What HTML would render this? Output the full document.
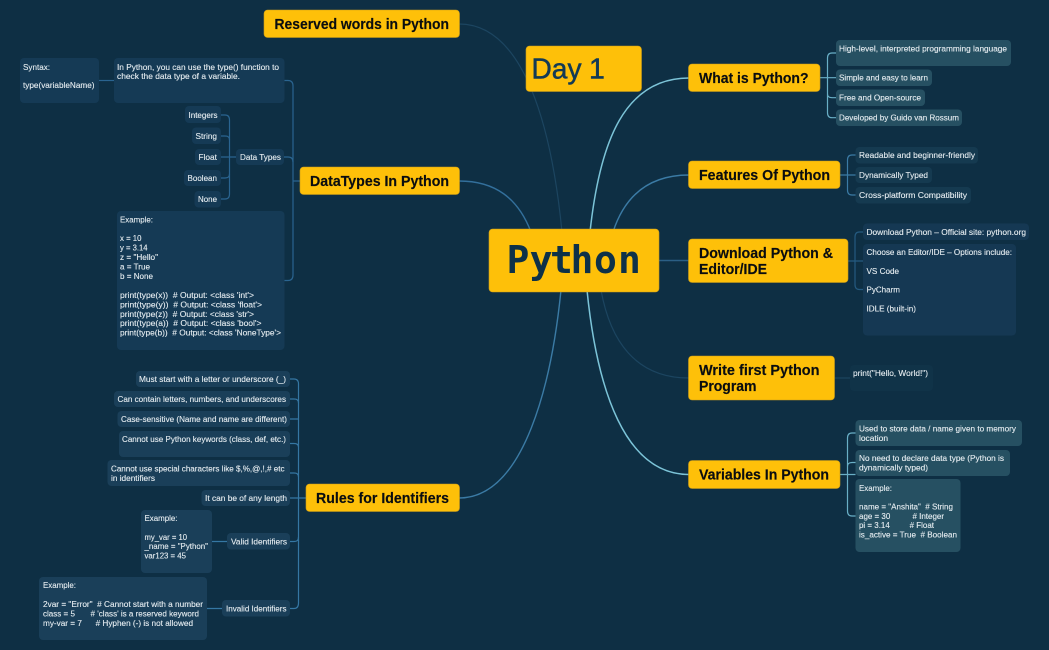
<!DOCTYPE html>
<html><head><meta charset="utf-8"><title>Python Mind Map</title>
<style>
html,body{margin:0;padding:0;background:#0e2f44;width:1049px;height:650px;overflow:hidden}
svg{display:block}
text{white-space:pre;font-family:"Liberation Sans",sans-serif}
.t{font-size:8.7px;fill:#e6edf1;stroke:#e6edf1;stroke-width:.12}
.h{font-size:14.4px;font-weight:700;fill:#0a0d10;stroke:#0a0d10;stroke-width:.15}
.y{fill:#fec009;stroke:#c99b1a;stroke-width:.6}
.l{fill:none;stroke-width:1.2}
</style></head><body>
<svg xmlns="http://www.w3.org/2000/svg" width="1049" height="650" viewBox="0 0 1049 650">
<rect width="1049" height="650" fill="#0e2f44"/>
<!-- main curves -->
<g fill="none">
<path d="M562 232C552 130 525 24 459 24" stroke="#1c4560" stroke-width="1.2"/>
<path d="M531 232C518 198 495 181 459 181" stroke="#33709c" stroke-width="1.4"/>
<path d="M561 290C552 380 525 498 459 498" stroke="#3b7ba5" stroke-width="1.4"/>
<path d="M590 232C600 140 625 78 689 78" stroke="#7cc4d8" stroke-width="1.5"/>
<path d="M613 232C625 195 650 175 689 175" stroke="#3b7ba5" stroke-width="1.4"/>
<path d="M659 260.5H689" stroke="#2b5f85" stroke-width="1.4"/>
<path d="M601 290C610 340 635 378 689 378" stroke="#1c4560" stroke-width="1.2"/>
<path d="M587 290C597 390 625 474.500 689 474.500" stroke="#7cc4d8" stroke-width="1.5"/>
</g>
<!-- branch lines -->
<g class="l" stroke="#2a6490">
<path d="M99 80.500H114"/>
<path d="M284 80.500H288C291.500 80.500 293 82.500 293 86V275C293 278.500 291.500 280.500 288 280.500H284"/>
<path d="M284 157H288C291.500 157 293 158.500 293 162M293 181H300"/>
<path d="M221 115H225C228 115 229.500 116.500 229.500 120V194C229.500 197.500 228 199 225 199H221"/>
<path d="M221 136H225C228 136 229.500 137 229.500 140M221 157H236M221 178H225C228 178 229.500 177 229.500 174"/>
</g>
<g class="l" stroke="#3577a3">
<path d="M290 379H294C297 379 298.500 380.500 298.500 384V603C298.500 606.500 297 608.500 294 608.500H290"/>
<path d="M290 399H294C297 399 298.500 400 298.500 403M290 419H298.500M290 443.500H294C297 443.500 298.500 444.500 298.500 447M290 473H294C297 473 298.500 474 298.500 477M290 498H306M290 541.500H294C297 541.500 298.500 540.500 298.500 537"/>
<path d="M212 541.500H227M207 608.500H222"/>
</g>
<g class="l" stroke="#69afc6">
<path d="M820 77.700H836M836 53H832C829 53 827.500 54.500 827.500 58V112.700C827.500 116.200 829 117.700 832 117.700H836M827.500 94C827.500 96.500 829 97.700 832 97.700H836"/>
<path d="M840 474.500H855.500M855.500 433H852C849 433 847.500 434.500 847.500 438V511C847.500 514.500 849 516 852 516H855.500M847.500 467C847.500 463.500 849 462.500 852 462.500H855.500"/>
</g>
<g class="l" stroke="#3b7ba5">
<path d="M840 175H855.500M855.500 155H852C849 155 847.500 156.500 847.500 160V190C847.500 193.500 849 195 852 195H855.500"/>
</g>
<g class="l" stroke="#245a80">
<path d="M848 261H863M863 232H859.500C856.500 232 855 233.500 855 237V284.500C855 288 856.500 289.500 859.500 289.500H863"/>
</g>
<path d="M834 378H850" stroke="#1c4560" stroke-width="1.2"/>
<!-- left data leaves -->
<g fill="#153a55">
<rect x="20" y="58" width="79" height="45" rx="4"/>
<rect x="114" y="58" width="170.500" height="45" rx="4"/>
<rect x="185" y="106" width="36" height="17" rx="4"/>
<rect x="192" y="127.500" width="29" height="16.500" rx="4"/>
<rect x="195" y="149" width="26" height="16" rx="4"/>
<rect x="184" y="170" width="37" height="16" rx="4"/>
<rect x="194.500" y="191" width="26.500" height="16.500" rx="4"/>
<rect x="236" y="149" width="48" height="16" rx="4"/>
<rect x="117" y="211" width="167.500" height="139" rx="4"/>
</g>
<!-- rules leaves -->
<g fill="#1a3f59">
<rect x="136" y="371" width="154" height="16" rx="4"/>
<rect x="114" y="391" width="176" height="16" rx="4"/>
<rect x="117.500" y="411" width="172.500" height="16" rx="4"/>
<rect x="119" y="431" width="171" height="26" rx="4"/>
<rect x="107.500" y="460" width="182.500" height="26" rx="4"/>
<rect x="201.500" y="490" width="88.500" height="16" rx="4"/>
<rect x="227" y="533" width="63" height="16.500" rx="4"/>
<rect x="141" y="510" width="71" height="63" rx="4"/>
<rect x="222" y="600" width="68" height="16.500" rx="4"/>
<rect x="39" y="577" width="168" height="63" rx="4"/>
</g>
<!-- right leaves -->
<g fill="#265062">
<rect x="836" y="40" width="175" height="26" rx="4"/>
<rect x="836" y="69.500" width="96" height="16.500" rx="4"/>
<rect x="836" y="89.500" width="89" height="16.500" rx="4"/>
<rect x="836" y="109.500" width="126" height="16.500" rx="4"/>
<rect x="855.500" y="420" width="166.500" height="26" rx="4"/>
<rect x="855.500" y="450" width="154.500" height="26" rx="4"/>
<rect x="855.500" y="479" width="105" height="73" rx="4"/>
</g>
<g fill="#153a50">
<rect x="855.500" y="147" width="122.500" height="16.500" rx="4"/>
<rect x="855.500" y="167" width="76.500" height="16" rx="4"/>
<rect x="855.500" y="187" width="115.500" height="16.500" rx="4"/>
</g>
<g fill="#153853">
<rect x="863" y="223.500" width="166" height="16.500" rx="4"/>
<rect x="863" y="244" width="153" height="91.500" rx="4"/>
</g>
<rect x="850" y="365" width="83" height="26" rx="4" fill="#103348"/>
<!-- yellow topics -->
<g class="y">
<rect x="264" y="10" width="195.500" height="27.500" rx="3.500"/>
<rect x="300" y="167" width="159.500" height="27.500" rx="3.500"/>
<rect x="306" y="484" width="153.500" height="27.500" rx="3.500"/>
<rect x="526" y="46" width="115.500" height="45.500" rx="3.500"/>
<rect x="489" y="229" width="170" height="63" rx="3.500"/>
<rect x="688.500" y="64" width="131.500" height="27.500" rx="3.500"/>
<rect x="688.500" y="161" width="151.500" height="27.500" rx="3.500"/>
<rect x="688.500" y="239" width="159.500" height="43.500" rx="3.500"/>
<rect x="688.500" y="356" width="146" height="44" rx="3.500"/>
<rect x="688.500" y="460.500" width="151.500" height="28" rx="3.500"/>
</g>
<!-- topic text -->
<g class="h">
<text x="274.500" y="29" textLength="174.500" lengthAdjust="spacingAndGlyphs">Reserved words in Python</text>
<text x="310" y="186" textLength="139" lengthAdjust="spacingAndGlyphs">DataTypes In Python</text>
<text x="316" y="503" textLength="133" lengthAdjust="spacingAndGlyphs">Rules for Identifiers</text>
<text x="699" y="83" textLength="109.500" lengthAdjust="spacingAndGlyphs">What is Python?</text>
<text x="699" y="180" textLength="131" lengthAdjust="spacingAndGlyphs">Features Of Python</text>
<text x="699" y="258" textLength="134" lengthAdjust="spacingAndGlyphs">Download Python &amp;</text>
<text x="699" y="274" textLength="68" lengthAdjust="spacingAndGlyphs">Editor/IDE</text>
<text x="699" y="375" textLength="120.500" lengthAdjust="spacingAndGlyphs">Write first Python</text>
<text x="699" y="391" textLength="57.500" lengthAdjust="spacingAndGlyphs">Program</text>
<text x="699" y="479.500" textLength="130" lengthAdjust="spacingAndGlyphs">Variables In Python</text>
</g>
<text font-size="28.500" fill="#123a55" stroke="#123a55" stroke-width=".5" x="531.500" y="78.500" textLength="50" lengthAdjust="spacingAndGlyphs">Day</text>
<text font-size="28.500" fill="#123a55" stroke="#123a55" stroke-width=".5" x="589" y="78.500">1</text>
<text y="273" x="506.500 529.600 550 570.500 594 618" style="font-family:'DejaVu Sans Mono',monospace" font-size="38" font-weight="700" fill="#0e3148">Python</text>
<!-- small text -->
<g class="t">
<text x="23" y="70" textLength="27" lengthAdjust="spacingAndGlyphs">Syntax:</text>
<text x="23" y="88" textLength="71.500" lengthAdjust="spacingAndGlyphs">type(variableName)</text>
<text x="117" y="70" textLength="162" lengthAdjust="spacingAndGlyphs">In Python, you can use the type() function to</text>
<text x="117" y="79" textLength="123" lengthAdjust="spacingAndGlyphs">check the data type of a variable.</text>
<text x="188.500" y="118" textLength="29" lengthAdjust="spacingAndGlyphs">Integers</text>
<text x="195.500" y="139" textLength="21.500" lengthAdjust="spacingAndGlyphs">String</text>
<text x="198.500" y="160" textLength="18.500" lengthAdjust="spacingAndGlyphs">Float</text>
<text x="187.500" y="181" textLength="29.500" lengthAdjust="spacingAndGlyphs">Boolean</text>
<text x="198" y="202" textLength="19" lengthAdjust="spacingAndGlyphs">None</text>
<text x="240" y="160" textLength="41" lengthAdjust="spacingAndGlyphs">Data Types</text>
<text x="120" y="222.500" textLength="33" lengthAdjust="spacingAndGlyphs">Example:</text>
<text x="120" y="241" textLength="21.500" lengthAdjust="spacingAndGlyphs">x = 10</text>
<text x="120" y="250.500" textLength="27.500" lengthAdjust="spacingAndGlyphs">y = 3.14</text>
<text x="120" y="260" textLength="38" lengthAdjust="spacingAndGlyphs">z = "Hello"</text>
<text x="120" y="269.500" textLength="30" lengthAdjust="spacingAndGlyphs">a = True</text>
<text x="120" y="279" textLength="33" lengthAdjust="spacingAndGlyphs">b = None</text>
<text x="120" y="298" textLength="134" lengthAdjust="spacingAndGlyphs">print(type(x))  # Output: &lt;class 'int'&gt;</text>
<text x="120" y="307.500" textLength="142" lengthAdjust="spacingAndGlyphs">print(type(y))  # Output: &lt;class 'float'&gt;</text>
<text x="120" y="317" textLength="134" lengthAdjust="spacingAndGlyphs">print(type(z))  # Output: &lt;class 'str'&gt;</text>
<text x="120" y="326" textLength="141.500" lengthAdjust="spacingAndGlyphs">print(type(a))  # Output: &lt;class 'bool'&gt;</text>
<text x="120" y="335.500" textLength="161" lengthAdjust="spacingAndGlyphs">print(type(b))  # Output: &lt;class 'NoneType'&gt;</text>
<text x="139" y="382" textLength="147" lengthAdjust="spacingAndGlyphs">Must start with a letter or underscore (_)</text>
<text x="117.500" y="402" textLength="168.500" lengthAdjust="spacingAndGlyphs">Can contain letters, numbers, and underscores</text>
<text x="121" y="422" textLength="166" lengthAdjust="spacingAndGlyphs">Case-sensitive (Name and name are different)</text>
<text x="122" y="442" textLength="164" lengthAdjust="spacingAndGlyphs">Cannot use Python keywords (class, def, etc.)</text>
<text x="111" y="471.500" textLength="173.500" lengthAdjust="spacingAndGlyphs">Cannot use special characters like $,%,@,!,# etc</text>
<text x="111" y="481" textLength="44" lengthAdjust="spacingAndGlyphs">in identifiers</text>
<text x="205" y="501" textLength="82" lengthAdjust="spacingAndGlyphs">It can be of any length</text>
<text x="231" y="544.700" textLength="56" lengthAdjust="spacingAndGlyphs">Valid Identifiers</text>
<text x="144.500" y="521" textLength="33" lengthAdjust="spacingAndGlyphs">Example:</text>
<text x="144.500" y="540" textLength="42.500" lengthAdjust="spacingAndGlyphs">my_var = 10</text>
<text x="144.500" y="549" textLength="63.500" lengthAdjust="spacingAndGlyphs">_name = "Python"</text>
<text x="144.500" y="558.500" textLength="41.500" lengthAdjust="spacingAndGlyphs">var123 = 45</text>
<text x="226" y="611.500" textLength="60.500" lengthAdjust="spacingAndGlyphs">Invalid Identifiers</text>
<text x="43" y="588" textLength="33" lengthAdjust="spacingAndGlyphs">Example:</text>
<text x="43" y="607" textLength="160" lengthAdjust="spacingAndGlyphs">2var = "Error"  # Cannot start with a number</text>
<text x="43" y="616.500" textLength="156" lengthAdjust="spacingAndGlyphs">class = 5       # 'class' is a reserved keyword</text>
<text x="43" y="626" textLength="150" lengthAdjust="spacingAndGlyphs">my-var = 7      # Hyphen (-) is not allowed</text>
<text x="839" y="51.300" textLength="168" lengthAdjust="spacingAndGlyphs">High-level, interpreted programming language</text>
<text x="839" y="80.700" textLength="89" lengthAdjust="spacingAndGlyphs">Simple and easy to learn</text>
<text x="839" y="100.700" textLength="82" lengthAdjust="spacingAndGlyphs">Free and Open-source</text>
<text x="839" y="120.700" textLength="120" lengthAdjust="spacingAndGlyphs">Developed by Guido van Rossum</text>
<text x="859" y="158" textLength="116" lengthAdjust="spacingAndGlyphs">Readable and beginner-friendly</text>
<text x="859" y="178" textLength="69" lengthAdjust="spacingAndGlyphs">Dynamically Typed</text>
<text x="859" y="198" textLength="108" lengthAdjust="spacingAndGlyphs">Cross-platform Compatibility</text>
<text x="866.500" y="235" textLength="159.500" lengthAdjust="spacingAndGlyphs">Download Python – Official site: python.org</text>
<text x="866.500" y="255" textLength="145.500" lengthAdjust="spacingAndGlyphs">Choose an Editor/IDE – Options include:</text>
<text x="866.500" y="274" textLength="32.500" lengthAdjust="spacingAndGlyphs">VS Code</text>
<text x="866.500" y="292.700" textLength="33.500" lengthAdjust="spacingAndGlyphs">PyCharm</text>
<text x="866.500" y="311.500" textLength="49.500" lengthAdjust="spacingAndGlyphs">IDLE (built-in)</text>
<text x="853" y="376" textLength="75" lengthAdjust="spacingAndGlyphs">print("Hello, World!")</text>
<text x="859" y="431.700" textLength="157" lengthAdjust="spacingAndGlyphs">Used to store data / name given to memory</text>
<text x="859" y="441" textLength="29" lengthAdjust="spacingAndGlyphs">location</text>
<text x="859" y="461" textLength="145" lengthAdjust="spacingAndGlyphs">No need to declare data type (Python is</text>
<text x="859" y="470.700" textLength="69" lengthAdjust="spacingAndGlyphs">dynamically typed)</text>
<text x="859" y="491" textLength="33" lengthAdjust="spacingAndGlyphs">Example:</text>
<text x="859" y="509.700" textLength="94" lengthAdjust="spacingAndGlyphs">name = "Anshita"  # String</text>
<text x="859" y="519" textLength="85" lengthAdjust="spacingAndGlyphs">age = 30          # Integer</text>
<text x="859" y="528" textLength="75" lengthAdjust="spacingAndGlyphs">pi = 3.14         # Float</text>
<text x="859" y="537.700" textLength="98" lengthAdjust="spacingAndGlyphs">is_active = True  # Boolean</text>
</g>
</svg>
</body></html>
